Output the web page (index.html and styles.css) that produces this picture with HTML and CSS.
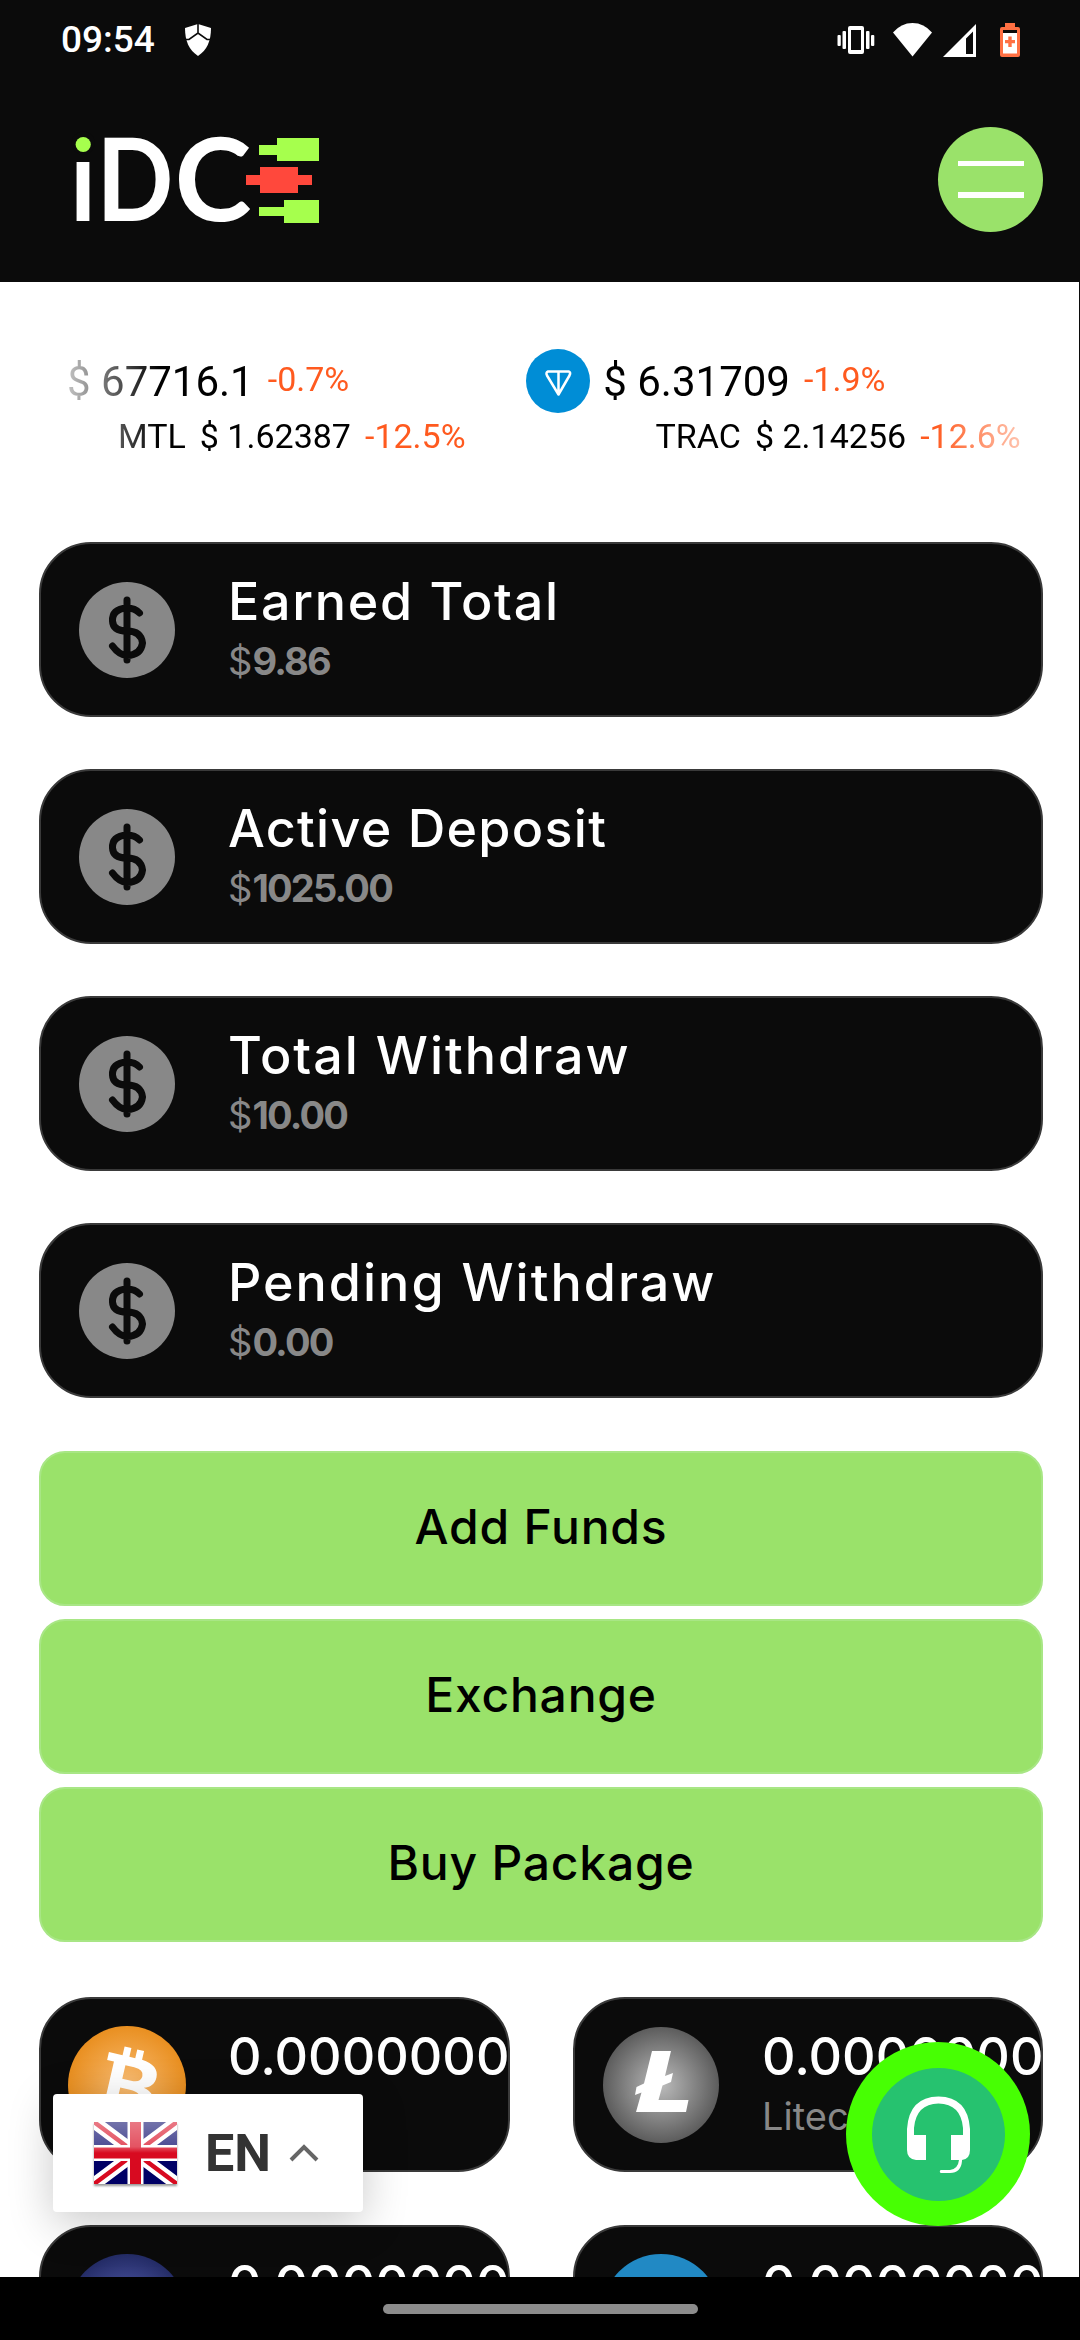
FILE: index.html
```
<!DOCTYPE html>
<html lang="en">
<head>
<meta charset="utf-8">
<title>iDCE</title>
<link rel="stylesheet" href="styles.css">
</head>
<body>
<div class="screen">
  <header class="top">
    <div class="status">
      <span class="clock">09:54</span>
      <svg class="shield" width="26" height="32" viewBox="0 0 26 32"><path d="M13 0L26 4C26 17 22 26 13 32C4 26 0 17 0 4Z" fill="#fff"/><path d="M13 0V9M0 15.500H4L13 9L22 15.500H26" fill="none" stroke="#0b0b0b" stroke-width="1.600"/></svg>
      <div class="status-icons">
        <svg width="38" height="28" viewBox="0 0 38 28" fill="#fff"><path fill-rule="evenodd" d="M13 0H25Q27 0 27 2V26Q27 28 25 28H13Q11 28 11 26V2Q11 0 13 0ZM14 4V24H24V4Z"/><rect x="5.500" y="5" width="3.500" height="18" rx="1"/><rect x="0.500" y="9" width="3.300" height="11" rx="1"/><rect x="29" y="5" width="3.500" height="18" rx="1"/><rect x="34" y="9" width="3.300" height="11" rx="1"/></svg>
        <svg class="wifi" width="39" height="34" viewBox="0 0 39 34"><path d="M0 9.500Q8 0 19.500 0T39 9.500L19.500 33.500Z" fill="#fff"/></svg>
        <svg class="signal" width="33" height="33" viewBox="0 0 33 33"><path fill-rule="evenodd" d="M0 33L33 0V33ZM23 14.500V30H30V7.500Z" fill="#fff"/></svg>
        <svg class="battery" width="20" height="34" viewBox="0 0 20 34"><path d="M5 0H15V4H18Q20 4 20 6V32Q20 34 18 34H2Q0 34 0 32V6Q0 4 2 4H5Z" fill="#ff7043"/><path d="M3 7H17V10H3Z" fill="#0b0b0b"/><path d="M3 10H17V30.500H3Z" fill="#fff"/><path d="M8.300 13.500H11.700V17H15V20.300H11.700V24H8.300V20.300H5V17H8.300Z" fill="#ff7043"/></svg>
      </div>
    </div>
    <div class="brand-row">
      <svg class="logo" width="256" height="150" viewBox="64 103 256 150">
        <g class="logo-text"><text x="70" y="220" textLength="26" lengthAdjust="spacingAndGlyphs">i</text><text x="96.500" y="220" textLength="77" lengthAdjust="spacingAndGlyphs">D</text><text x="174.500" y="220" textLength="77" lengthAdjust="spacingAndGlyphs">C</text></g>
        <circle cx="83.200" cy="142" r="11.500" fill="#0b0b0b"/><circle cx="83.200" cy="143.500" r="7.600" fill="#a6ff4d"/>
        <path d="M259 144H277V137H319V160H277V154H259ZM259 206H284V199H319V222H284V215H259Z" fill="#a6ff4d"/>
        <path d="M246 174H260V166H298V174H312V184H298V192H260V184H246Z" fill="#ff483c"/>
      </svg>
      <button class="menu" aria-label="Menu"><span></span><span></span></button>
    </div>
  </header>
  <main class="content">
    <section class="ticker">
      <div class="line line-big">
        <span class="price">$ 67716.1</span><span class="chg">-0.7%</span>
        <svg class="ton" width="64" height="64" viewBox="0 0 64 64"><circle cx="32" cy="32" r="32" fill="#008dd6"/><path d="M22 22.500H43Q45 23.500 43.500 26.500L32.500 45.500L21 26.500Q19.500 23.500 22 22.500ZM32.500 23V45" fill="none" stroke="#fff" stroke-width="2.500" stroke-linejoin="round"/></svg>
        <span class="price">$ 6.31709</span><span class="chg">-1.9%</span>
      </div>
      <div class="line line-small">
        <span class="sym">MTL</span><span class="price">$ 1.62387</span><span class="chg">-12.5%</span>
        <span class="sym second">TRAC</span><span class="price">$ 2.14256</span><span class="chg">-12.6%</span>
      </div>
    </section>
    <section class="stats">
      <article class="card stat"><svg class="dollar" viewBox="0 0 96 96"><circle cx="48" cy="48" r="48" fill="#888"/><path d="M48 18V78M60.500 31Q56 26 48 26Q33 27 33.500 39Q34 49 48 49T63.500 61Q62 73 48 73.500Q40 73 33.500 64" fill="none" stroke="#0b0b0b" stroke-width="7" stroke-linecap="round"/></svg><div class="info"><h2 class="t1">Earned Total</h2><p>$<b>9.86</b></p></div></article>
      <article class="card stat"><svg class="dollar" viewBox="0 0 96 96"><circle cx="48" cy="48" r="48" fill="#888"/><path d="M48 18V78M60.500 31Q56 26 48 26Q33 27 33.500 39Q34 49 48 49T63.500 61Q62 73 48 73.500Q40 73 33.500 64" fill="none" stroke="#0b0b0b" stroke-width="7" stroke-linecap="round"/></svg><div class="info"><h2 class="t2">Active Deposit</h2><p>$<b>1025.00</b></p></div></article>
      <article class="card stat"><svg class="dollar" viewBox="0 0 96 96"><circle cx="48" cy="48" r="48" fill="#888"/><path d="M48 18V78M60.500 31Q56 26 48 26Q33 27 33.500 39Q34 49 48 49T63.500 61Q62 73 48 73.500Q40 73 33.500 64" fill="none" stroke="#0b0b0b" stroke-width="7" stroke-linecap="round"/></svg><div class="info"><h2 class="t3">Total Withdraw</h2><p>$<b>10.00</b></p></div></article>
      <article class="card stat"><svg class="dollar" viewBox="0 0 96 96"><circle cx="48" cy="48" r="48" fill="#888"/><path d="M48 18V78M60.500 31Q56 26 48 26Q33 27 33.500 39Q34 49 48 49T63.500 61Q62 73 48 73.500Q40 73 33.500 64" fill="none" stroke="#0b0b0b" stroke-width="7" stroke-linecap="round"/></svg><div class="info"><h2 class="t3">Pending Withdraw</h2><p>$<b>0.00</b></p></div></article>
    </section>
    <section class="actions">
      <button class="action">Add Funds</button>
      <button class="action">Exchange</button>
      <button class="action">Buy Package</button>
    </section>
    <section class="coins">
      <article class="card coin"><svg class="coin-icon" viewBox="0 0 118 118"><defs><radialGradient id="btc"><stop offset="0" stop-color="#f9bd74"/><stop offset="1" stop-color="#e98f20"/></radialGradient></defs><circle cx="59" cy="59" r="59" fill="url(#btc)"/><g transform="rotate(13 59 59)"><path fill="#fff" fill-rule="evenodd" d="M34 31H48V22H55V31H61V22H68V31C80 32 86 37 86 45C86 52 82 56 76 58C85 60 89 65 89 73C89 84 81 88 68 89V98H61V89H55V98H48V89H34V81H41V39H34ZM53 40V54H62Q72 54 72 47T62 40ZM53 63V80H63Q75 80 75 71.500T63 63Z"/></g></svg><div class="info"><h2>0.0000000</h2></div></article>
      <article class="card coin"><svg class="coin-icon" viewBox="0 0 118 118"><defs><radialGradient id="ltc"><stop offset="0" stop-color="#bcbcbc"/><stop offset="1" stop-color="#5c5c5c"/></radialGradient></defs><circle cx="59" cy="59" r="58" fill="url(#ltc)"/><path fill="#fff" d="M50 25H69L63 50L71 47L69 56L60.500 59.500L56.500 74H86.500L84 86H34L39.500 66.500L33 69L34.500 61L42 57.500Z"/></svg><div class="info"><h2>0.0000000</h2><p>Litecoin</p></div></article>
      <article class="card coin"><svg class="coin-icon" viewBox="0 0 118 118"><defs><radialGradient id="navy"><stop offset="0" stop-color="#5a63b8"/><stop offset="1" stop-color="#242c66"/></radialGradient></defs><circle cx="59" cy="59" r="59" fill="url(#navy)"/></svg><div class="info"><h2>0.0000000</h2></div></article>
      <article class="card coin"><svg class="coin-icon" viewBox="0 0 118 118"><circle cx="59" cy="59" r="59" fill="#2189c4"/></svg><div class="info"><h2>0.0000000</h2></div></article>
    </section>
  </main>
  <div class="lang">
    <svg class="flag" width="83" height="62" viewBox="0 0 83 62"><defs><linearGradient id="gloss" x2="0" y2="1"><stop offset="0" stop-color="#fff" stop-opacity=".45"/><stop offset=".4" stop-color="#fff" stop-opacity=".3"/><stop offset=".5" stop-color="#fff" stop-opacity="0"/></linearGradient><clipPath id="fc"><rect width="83" height="62"/></clipPath></defs><g clip-path="url(#fc)"><rect width="83" height="62" fill="#006"/><path d="M0 0L83 62M83 0L0 62" stroke="#fff" stroke-width="13"/><path d="M0 0L83 62M83 0L0 62" stroke="#d80a20" stroke-width="4.500"/><path d="M41.500 0V62M0 31H83" stroke="#fff" stroke-width="16"/><path d="M41.500 0V62M0 31H83" stroke="#d80a20" stroke-width="11"/><rect width="83" height="62" fill="url(#gloss)"/></g></svg>
    <span>EN</span>
    <svg class="chev" width="30" height="18" viewBox="0 0 30 18"><path d="M2 16L15 3L28 16" fill="none" stroke="#666" stroke-width="4"/></svg>
  </div>
  <button class="chat" aria-label="Support"><svg width="133" height="133" viewBox="0 0 133 133"><circle cx="66.500" cy="66.500" r="66.500" fill="#26c26f"/><path d="M35 82V61Q37 29 66.500 28.500Q96 29 98 61V82Q98 91 90 92V93Q89 105 78 105H68.500Q67 103.500 68.500 102H78Q86 101 87 92H79V67H91V60Q89 36 66.500 35.500Q44 36 42 60V67H54V92H44Q35 91 35 82Z" fill="#fff"/></svg></button>
  <footer class="nav"><span></span></footer>
</div>
</body>
</html>
```
FILE: styles.css
```
* { box-sizing: border-box; margin: 0; padding: 0; }
body { background: #fff; font-family: Inter, "Open Sans", sans-serif; }
button { border: 0; font: inherit; }
svg { display: block; flex: none; }

.screen { position: relative; width: 1080px; height: 2340px; overflow: hidden; display: flex; flex-direction: column; }

.top { height: 282px; flex: none; background: #0b0b0b; }
.status { height: 80px; display: flex; align-items: center; padding-left: 61px; padding-right: 60px; font-family: Roboto, sans-serif; }
.clock { font-size: 37px; font-weight: 500; line-height: 40px; color: #fff; width: 124px; }
.status-icons { margin-left: auto; display: flex; align-items: center; }
.wifi { margin-left: 18px; }
.signal { margin-left: 11px; }
.battery { margin-left: 24px; }
.brand-row { display: flex; align-items: center; justify-content: space-between; padding: 24px 37px 0 64px; }
.logo-text { font: 700 114.5px Lato, sans-serif; fill: #fff; }
.menu { width: 105px; height: 105px; border-radius: 50%; background: #9ae26a; display: flex; flex-direction: column; align-items: center; justify-content: center; gap: 26px; }
.menu span { width: 66px; height: 5.500px; background: #fff; }

.content { flex: 1; min-height: 0; overflow: hidden; padding: 0 36px 0 39px; border-right: 1px solid #0b0b0b; }

.ticker { height: 260px; padding-top: 65px; font-family: Roboto, sans-serif; white-space: nowrap; -webkit-mask-image: linear-gradient(90deg, transparent 0, #000 120px, #000 895px, transparent 1030px); mask-image: linear-gradient(90deg, transparent 0, #000 120px, #000 895px, transparent 1030px); }
.line { display: flex; color: #000; }
.line-big { height: 69px; padding: 0 0 1px 28px; align-items: center; font-size: 42px; }
.line-small { height: 40px; padding-left: 79px; align-items: center; font-size: 34px; line-height: 40px; }
.line .chg { font-size: 34px; color: #ff5a1f; margin-left: 14px; }
.line-big .chg { position: relative; top: -2px; }
.ton { margin: 0 13px 0 177px; }
.sym { margin-right: 14px; }
.second { margin-left: 190px; }

.card { border: 2px solid #3a3a3a; border-radius: 52px; background: #0b0b0b; height: 175px; display: flex; overflow: hidden; }
.stats { display: grid; gap: 52px; }
.stat { padding-left: 38px; align-items: center; }
.dollar { width: 96px; height: 96px; }
.info { padding-left: 53px; align-self: flex-start; padding-top: 26px; white-space: nowrap; }
.info h2 { font-size: 52px; font-weight: 500; line-height: 64px; color: #fff; letter-spacing: 0; }
.info .t1 { letter-spacing: 1.7px; }
.info .t2 { letter-spacing: 1.3px; }
.info .t3 { letter-spacing: 2px; }
.info p { font-size: 38px; line-height: 54px; color: #888; font-weight: 400; }
.info b { font-weight: 700; letter-spacing: -1.8px; }

.actions { display: grid; gap: 13px; margin-top: 53px; }
.action { height: 155px; border: 2px solid #a8e685; border-radius: 26px; background: #9ae26a; font-size: 48px; font-weight: 500; letter-spacing: 0.8px; color: #000; padding-bottom: 4px; }

.coins { display: grid; grid-template-columns: 471px 470px; column-gap: 63px; row-gap: 53px; margin-top: 55px; }
.coin { padding-left: 27px; }
.coin-icon { width: 118px; height: 118px; margin-top: 27px; }
.coin .info { padding-left: 42px; }

.lang { position: absolute; left: 53px; top: 2094px; width: 310px; height: 118px; background: #fff; border-radius: 4px; display: flex; align-items: center; padding-left: 41px; box-shadow: 0 10px 45px rgba(0,0,0,.22); font: 700 52px Roboto, sans-serif; color: #333; }
.flag { margin-right: 28px; filter: drop-shadow(0 2px 1px rgba(0,0,0,.4)); }
.chev { margin-left: 18px; }
.chat { position: absolute; left: 846px; top: 2042px; width: 184px; height: 184px; border-radius: 50%; background: #47ff03; display: grid; place-items: center; }
.nav { position: relative; height: 63px; flex: none; background: #000; display: flex; justify-content: center; padding-top: 27px; }
.nav span { width: 315px; height: 10px; border-radius: 5px; background: #8c8c8c; }
```
